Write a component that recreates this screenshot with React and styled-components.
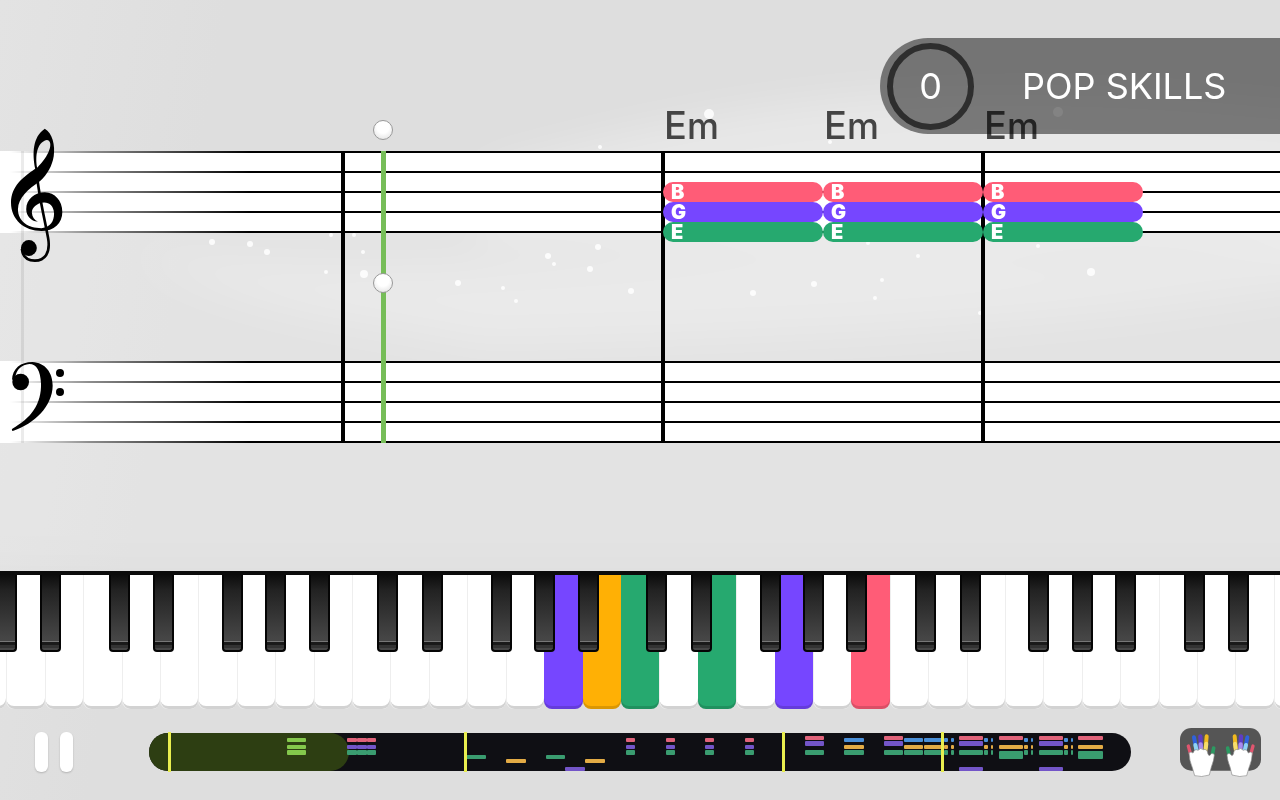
import React from "react";
import styled, {createGlobalStyle} from "styled-components";

const colors = {
  pink: '#ff5c77',
  purple: '#7646ff',
  green: '#26a96f',
  orange: '#ffb005',
}

const mapColors = {
  pink: '#e0637a',
  purple: '#7355c8',
  green: '#3a9c70',
  orange: '#e3ab45',
  blue: '#4a8fd8',
  lime: '#84c84c',
  yellow: '#e9ee4f',
}

const chords = ['Em', 'Em', 'Em']

const chordNotes = [
  {name: 'B', color: colors.pink},
  {name: 'G', color: colors.purple},
  {name: 'E', color: colors.green},
]

const keyNames = ['G', 'A', 'B', 'C', 'D', 'E', 'F']

// shift of the black key from the edge between two white keys
const blackShift = {G: 0, A: 5, C: -3, D: 3, F: -5}

const activeKeys = {
  15: colors.purple,
  16: colors.orange,
  17: colors.green,
  19: colors.green,
  21: colors.purple,
  23: colors.pink,
}

const keys = Array.from({length: 35}, (_, i) => ({
  id: i,
  name: keyNames[i % 7],
  color: activeKeys[i],
}))

// [x, width, [color, y, height]...]
const songMap = [
  [138, 19, ['lime', 5, 4], ['lime', 12, 4], ['lime', 17, 5]],
  [198, 10, ['pink', 5, 4], ['purple', 12, 4], ['green', 17, 5]],
  [208, 10, ['pink', 5, 4], ['purple', 12, 4], ['green', 17, 5]],
  [218, 9, ['pink', 5, 4], ['purple', 12, 4], ['green', 17, 5]],
  [317, 20, ['green', 22, 4]],
  [357, 20, ['orange', 26, 4]],
  [397, 19, ['green', 22, 4]],
  [416, 20, ['purple', 34, 4]],
  [436, 20, ['orange', 26, 4]],
  [477, 9, ['pink', 5, 4], ['purple', 12, 4], ['green', 17, 5]],
  [517, 9, ['pink', 5, 4], ['purple', 12, 4], ['green', 17, 5]],
  [556, 9, ['pink', 5, 4], ['purple', 12, 4], ['green', 17, 5]],
  [596, 9, ['pink', 5, 4], ['purple', 12, 4], ['green', 17, 5]],
  [656, 19, ['pink', 3, 4], ['purple', 8, 5], ['green', 17, 5]],
  [695, 20, ['blue', 5, 4], ['orange', 12, 4], ['green', 17, 5]],
  [735, 19, ['pink', 3, 4], ['purple', 8, 5], ['green', 17, 5]],
  [755, 19, ['blue', 5, 4], ['orange', 12, 4], ['green', 17, 5]],
  [775, 18, ['blue', 5, 4], ['orange', 12, 4], ['green', 17, 5]],
  [795, 4, ['blue', 5, 4], ['orange', 12, 4], ['green', 17, 5]],
  [802, 3, ['blue', 5, 4], ['orange', 12, 4], ['green', 17, 5]],
  [810, 24, ['pink', 3, 4], ['purple', 8, 5], ['green', 17, 5], ['purple', 34, 4]],
  [835, 4, ['blue', 5, 4], ['orange', 12, 4], ['green', 17, 5]],
  [842, 2, ['blue', 5, 4], ['orange', 12, 4], ['green', 17, 5]],
  [850, 24, ['pink', 3, 4], ['orange', 12, 4], ['green', 18, 8]],
  [875, 4, ['blue', 5, 4], ['orange', 12, 4], ['green', 17, 5]],
  [882, 2, ['blue', 5, 4], ['orange', 12, 4], ['green', 17, 5]],
  [890, 24, ['pink', 3, 4], ['purple', 8, 5], ['green', 17, 5], ['purple', 34, 4]],
  [915, 4, ['blue', 5, 4], ['orange', 12, 4], ['green', 17, 5]],
  [922, 2, ['blue', 5, 4], ['orange', 12, 4], ['green', 17, 5]],
  [929, 25, ['pink', 3, 4], ['orange', 12, 4], ['green', 18, 8]],
]

const sections = [20, 316, 634, 793]

const sparks = [
  [212, 242, 3], [250, 244, 3], [267, 252, 3], [326, 272, 2], [363, 252, 2], [364, 274, 4],
  [458, 283, 3], [503, 288, 2], [516, 301, 2], [548, 256, 3], [554, 264, 2], [590, 269, 3],
  [598, 247, 3], [631, 291, 3], [753, 293, 3], [814, 284, 3], [875, 298, 2], [882, 280, 2],
  [918, 256, 2], [1038, 246, 2], [1091, 272, 4], [980, 313, 2], [709, 114, 5], [868, 243, 2],
  [331, 235, 2], [354, 235, 2], [600, 147, 2], [830, 142, 2], [1058, 112, 5],
]

const Backdrop = () => (
  <BackdropDrawing viewBox="0 0 1280 800" preserveAspectRatio="xMidYMin slice" aria-hidden="true">
    <defs>
      <filter id="soft" x="-20%" y="-50%" width="140%" height="200%">
        <feGaussianBlur stdDeviation="20"/>
      </filter>
    </defs>
    <g filter="url(#soft)" fill="#fff">
      <path d="M480 170 C760 90 980 70 1340 110 L1340 250 L480 240Z" opacity=".3"/>
      <path d="M130 250 C420 290 640 240 900 250 C1080 252 1200 270 1340 240 L1340 280 C1060 330 700 340 480 345 C380 320 260 320 130 250Z" opacity=".25"/>
      <path d="M-60 200 H1340 V570 H-60Z" opacity=".16"/>
    </g>
    {sparks.map(([x, y, r]) => <circle key={`${x}-${y}`} cx={x} cy={y} r={r} fill="#fff" opacity=".85"/>)}
  </BackdropDrawing>
)

const TrebleClef = () => (
  <Clef viewBox="30 50 160 410" width="53" height="136" role="img" aria-label="Treble clef">
    <path
      fillRule="evenodd"
      d="M106 176 C97 130 98 80 135 55 C158 68 167 105 162 138 C157 168 143 192 121 213 C84 238 55 264 54 298 C54 335 85 355 125 355 C153 352 163 334 163 310 C162 290 150 278 133 278 C110 279 96 295 96 308 C97 322 104 331 114 335 C95 336 79 318 79 298 C79 268 105 247 135 247 C165 248 188 272 188 306 C188 340 163 364 125 364 C73 364 33 330 33 278 C34 228 68 203 106 176 Z M112 173 C106 140 110 96 141 89 C153 90 154 105 149 118 C143 138 128 156 112 173 Z"
    />
    <path d="M112 200 C118 260 133 320 145 385 C153 430 135 453 105 453 C82 453 68 440 66 418" fill="none" stroke="#000" strokeWidth="8"/>
    <circle cx="87" cy="415" r="24"/>
  </Clef>
)

const BassClef = () => (
  <Clef viewBox="30 45 165 213" width="55" height="71" role="img" aria-label="Bass clef">
    <path d="M36 102 C37 67 63 48 97 48 C136 50 158 80 158 119 C157 180 105 232 38 255 C35 253 35 250 37 248 C92 218 125 175 123 112 C121 75 110 54 88 54 C65 56 49 70 46 94 Z"/>
    <circle cx="62" cy="108" r="25"/>
    <circle cx="180" cy="81" r="12"/>
    <circle cx="180" cy="138" r="12"/>
  </Clef>
)

const Hand = (props) => (
  <g {...props} strokeLinecap="round">
    <path d="M25 57 L33 86" stroke="#e0566f" strokeWidth="10"/>
    <path d="M42 31 L50 70" stroke="#2f62dc" strokeWidth="12"/>
    <path d="M46 54 L51 76" stroke="#8fd3f3" strokeWidth="12"/>
    <path d="M61 28 L63 60" stroke="#5f3cc4" strokeWidth="13"/>
    <path d="M62 52 L63 72" stroke="#a88bee" strokeWidth="13"/>
    <path d="M80 28 L77 62" stroke="#f0b91e" strokeWidth="12"/>
    <path d="M79 50 L76 72" stroke="#f7dd6c" strokeWidth="12"/>
    <path d="M101 63 L96 88" stroke="#2c9a62" strokeWidth="11"/>
    <path
      d="M27 78 Q33 72 39 78 Q44 64 54 70 Q62 60 70 68 Q82 64 84 82 Q88 90 94 80 Q102 78 103 84 Q102 100 94 120 L88 144 Q64 152 44 146 L37 122 Q28 102 27 78Z"
      fill="#fff" stroke="#8a8a8a" strokeWidth="2"
    />
  </g>
)

const Keyboard = () => (
  <Piano>
    <Keys>
      {keys.map(({id, name, color}) => (
        <KeySlot key={id}>
          <WhiteKey type="button" aria-label={name} $color={color}/>
          {name in blackShift && (
            <BlackKey type="button" aria-label={name + ' sharp'} $shift={blackShift[name]}/>
          )}
        </KeySlot>
      ))}
    </Keys>
  </Piano>
)

const SongMap = () => (
  <SongMapDrawing viewBox="0 0 982 38" preserveAspectRatio="none" role="img" aria-label="Song progress">
    <rect width="982" height="38" rx="19" fill="#0f0f14"/>
    <rect width="200" height="38" rx="19" fill="#2d3e12"/>
    {songMap.map(([x, width, ...notes]) => notes.map(([color, y, height]) => (
      <rect key={`${x}-${y}`} x={x} y={y} width={width} height={height} rx="1" fill={mapColors[color]}/>
    )))}
    {sections.map(x => <rect key={x} x={x - 1} y="-1" width="3" height="40" fill={mapColors.yellow}/>)}
  </SongMapDrawing>
)

const App = () => {
  return (
    <>
      <GlobalStyle/>
      <Page>
        <Backdrop/>
        <Score>
          <ChordRow>
            {chords.map((chord, i) => (
              <ChordName key={i}>{chord[0]}<small>{chord.slice(1)}</small></ChordName>
            ))}
          </ChordRow>
          <System>
            <Staves>
              {['treble', 'bass'].map(staff => (
                <Staff key={staff}>
                  {[1, 2, 3, 4, 5].map(line => <StaffLine key={line}/>)}
                </Staff>
              ))}
            </Staves>
            <Margin/>
            <Measures>
              {[1, 2, 3, 4, 5, 6, 7, 8].map(n => <Measure key={n}/>)}
            </Measures>
            <Notes>
              {chords.map((chord, i) => (
                <NoteStack key={i}>
                  {chordNotes.map(({name, color}) => <Note key={name} $color={color}>{name}</Note>)}
                </NoteStack>
              ))}
            </Notes>
            <Clefs>
              <TrebleClef/>
              <BassClef/>
            </Clefs>
            <Playhead>
              <Knob/>
              <Knob/>
            </Playhead>
          </System>
        </Score>
        <SkillBadge>
          <Points>0</Points>
          <SkillName>POP SKILLS</SkillName>
        </SkillBadge>
        <Keyboard/>
        <Controls>
          <PauseButton type="button" aria-label="Pause">
            <PauseBar/>
            <PauseBar/>
          </PauseButton>
          <SongMap/>
          <HandsButton type="button" aria-label="Both hands">
            <svg viewBox="0 0 243 153" width="81" height="51">
              <rect y="3" width="243" height="128" rx="34" fill="#555"/>
              <Hand/>
              <Hand transform="translate(244 0) scale(-1 1)"/>
            </svg>
          </HandsButton>
        </Controls>
      </Page>
    </>
  )
}

export default App;

const GlobalStyle = createGlobalStyle`
  * {
    box-sizing: border-box;
  }
  body {
    margin: 0;
    font-family: Inter, "Liberation Sans", sans-serif;
  }
  button {
    border: none;
    padding: 0;
    background: none;
    cursor: pointer;
  }
`

const Page = styled.main`
  position: relative;
  display: flex;
  flex-direction: column;
  min-height: 100vh;
  overflow: hidden;
  background: linear-gradient(100deg, #e3e3e3 0%, #dedede 16%, #dedede 100%);
`
const BackdropDrawing = styled.svg`
  position: absolute;
  inset: 0;
  width: 100%;
  height: 100%;
`

const Score = styled.section`
  position: relative;
  flex: 1;
  padding: 104px 0 128px;
  overflow: hidden;
`
const ChordRow = styled.div`
  display: flex;
  padding-left: 664px;
`
const ChordName = styled.div`
  flex: none;
  width: 160px;
  height: 47px;
  font-size: 38px;
  line-height: 42px;
  font-weight: 500;
  color: #444;

  >small {
    font-size: 36px;
  }
`

const System = styled.div`
  display: grid;
  grid-template-columns: minmax(0, 1fr);

  >* {
    grid-area: 1 / 1;
  }
`
const Staves = styled.div`
  display: flex;
  flex-direction: column;
  gap: 128px;
`
const Staff = styled.div`
  display: flex;
  flex-direction: column;
  justify-content: space-between;
  height: 82px;
  background: #fff;
`
const StaffLine = styled.div`
  height: 2px;
  background: linear-gradient(90deg, transparent 10px, rgba(0, 0, 0, .45) 90px, #000 250px);
`
const Margin = styled.div`
  width: 24px;
  border-right: 3px solid rgba(0, 0, 0, .08);
`
const Measures = styled.div`
  display: flex;
  padding-left: 341px;
  overflow: hidden;
`
const Measure = styled.div`
  flex: none;
  width: 320px;
  border-left: 4px solid #000;
`
const Notes = styled.div`
  display: flex;
  padding: 31px 0 0 663px;
`
const NoteStack = styled.div`
  flex: none;
  width: 160px;
`
const Note = styled.div`
  height: 20px;
  padding-left: 8px;
  border-radius: 10px;
  font-size: 20px;
  line-height: 20px;
  font-weight: 900;
  color: #fff;
  background: ${({$color}) => $color};
`
const Clefs = styled.div`
  display: flex;
  flex-direction: column;
  justify-content: space-between;
  margin: -24px 0 11px;
  padding-left: 10px;
`
const Clef = styled.svg`
  display: block;
`
const Playhead = styled.div`
  display: flex;
  flex-direction: column;
  align-items: center;
  gap: 133px;
  width: 20px;
  margin: -31px 0 0 373px;
  background: linear-gradient(#76bd58, #76bd58) center bottom / 5px 292px no-repeat;
`
const Knob = styled.div`
  width: 20px;
  height: 20px;
  border: 1px solid #999;
  border-radius: 50%;
  background: radial-gradient(circle at 50% 35%, #fff 40%, #dcdcdc 100%);
`

const SkillBadge = styled.aside`
  position: absolute;
  top: 38px;
  right: 0;
  display: flex;
  align-items: center;
  gap: 48px;
  width: 400px;
  height: 96px;
  padding-left: 7px;
  border-radius: 48px 0 0 48px;
  color: #fff;
  font-size: 36px;
  background: rgba(0, 0, 0, .48);
`
const Points = styled.div`
  display: flex;
  align-items: center;
  justify-content: center;
  width: 87px;
  height: 87px;
  border: 6px solid #2e2e2e;
  border-radius: 50%;
`
const SkillName = styled.div`
  white-space: nowrap;
`

const Piano = styled.section`
  position: relative;
  overflow: hidden;
  border-top: 4px solid #0b0b0b;
`
const Keys = styled.div`
  display: flex;
  height: 134px;
  margin: 0 -2.5%;
`
const KeySlot = styled.div`
  position: relative;
  flex: 1;
`
const WhiteKey = styled.button`
  display: block;
  width: 100%;
  height: 100%;
  border-radius: 0 0 8px 8px;
  background: ${({$color}) => $color || '#fff'};
  box-shadow: ${({$color}) => $color
    ? 'inset 0 -3px 0 rgba(0, 0, 0, .14)'
    : 'inset 1px 0 0 #eee, inset 0 -3px 0 #d2d2d2'};
`
const BlackKey = styled.button`
  position: absolute;
  z-index: 1;
  top: 0;
  right: ${({$shift}) => -11 - $shift}px;
  width: 21px;
  height: 77px;
  border: 2px solid #050505;
  border-top: none;
  border-radius: 0 0 4px 4px;
  background:
    linear-gradient(#777, #777) 0 66px / 100% 1px no-repeat,
    linear-gradient(#1a1a1a, #1a1a1a) 0 67px / 100% 3px no-repeat,
    linear-gradient(#333, #333) 0 70px / 100% 3px no-repeat,
    linear-gradient(#0c0c0c, #222 20%, #464646 85%);
`

const Controls = styled.footer`
  position: relative;
  display: flex;
  align-items: center;
  height: 91px;
  padding: 0 19px 5px 35px;
`
const PauseButton = styled.button`
  display: flex;
  justify-content: space-between;
  flex: none;
  width: 38px;
  height: 40px;
`
const PauseBar = styled.span`
  width: 13px;
  height: 40px;
  border-radius: 6px;
  background: #fff;
  box-shadow: 0 1px 2px rgba(0, 0, 0, .2);
`
const SongMapDrawing = styled.svg`
  flex: 1;
  min-width: 0;
  height: 38px;
  margin: 0 49px 0 76px;
  overflow: visible;
`
const HandsButton = styled.button`
  display: flex;
  flex: none;
`
